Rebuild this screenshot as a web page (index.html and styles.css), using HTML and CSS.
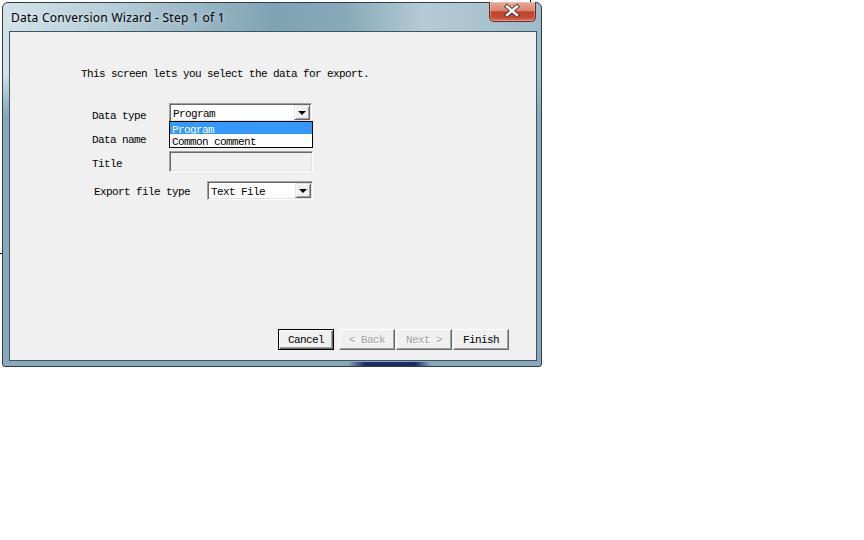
FILE: index.html
```html
<!DOCTYPE html>
<html lang="en">
<head>
  <meta charset="UTF-8" />
  <title>Data Conversion Wizard</title>
  <link rel="stylesheet" href="styles.css">
</head>
<body>
  <div class="window">
    <div class="titlebar">
      <span class="title">Data Conversion Wizard - Step 1 of 1</span>
      <button class="close-btn" aria-label="Close">
        <svg width="47" height="20" viewBox="0 0 47 20">
          <path d="M18 5.5 L28 14 M28 5.5 L18 14" stroke="#4a2a26" stroke-width="4.2" stroke-linecap="square" fill="none"/>
          <path d="M18 5.5 L28 14 M28 5.5 L18 14" stroke="#fff" stroke-width="2.4" stroke-linecap="square" fill="none"/>
        </svg>
      </button>
    </div>

    <div class="client">
      <p class="intro">This screen lets you select the data for export.</p>

      <div class="form">
        <div class="row row-type">
          <label>Data type</label>
          <div class="combo combo-wide">
            <span class="combo-text">Program</span>
            <span class="combo-arrow"></span>
            <ul class="combo-list">
              <li class="selected">Program</li>
              <li>Common comment</li>
            </ul>
          </div>
        </div>

        <div class="row row-name">
          <label>Data name</label>
          <div class="field"></div>
        </div>

        <div class="row row-title">
          <label>Title</label>
          <div class="field disabled"></div>
        </div>

        <div class="row row-export">
          <label class="label-wide">Export file type</label>
          <div class="combo combo-narrow">
            <span class="combo-text">Text File</span>
            <span class="combo-arrow"></span>
          </div>
        </div>
      </div>

      <div class="buttons">
        <button class="btn btn-default">Cancel</button>
        <button class="btn" disabled>&lt; Back</button>
        <button class="btn" disabled>Next &gt;</button>
        <button class="btn">Finish</button>
      </div>
    </div>
  </div>
</body>
</html>
```

FILE: styles.css
```css
* {
  box-sizing: border-box;
}

body {
  margin: 0;
  background:
    linear-gradient(#000, #000) 530px 0 / 1px 2px no-repeat,
    linear-gradient(#000, #000) 0 253px / 2px 1px no-repeat,
    #fff;
  font-family: "Liberation Mono", monospace;
  font-size: 11px;
  letter-spacing: -0.6px;
  color: #000;
}

/* window frame */
.window {
  position: relative;
  margin: 2px 0 0 2px;
  width: 540px;
  height: 365px;
  border: 1px solid #2e3d47;
  border-radius: 6px 6px 3px 3px;
  padding: 0 4px 5px 6px;
  display: flex;
  flex-direction: column;
  background:
    linear-gradient(to right, transparent 345px, #1b2a63 362px, #1b2a63 412px, transparent 428px) left bottom / 100% 4px no-repeat,
    linear-gradient(to bottom, rgba(136,170,187,0) 0, rgba(136,170,187,0) 70px, #88a9b9 112px),
    linear-gradient(to right, #d3e2e9 0, #b5cdd8 110px, #80a3b4 270px, #86a8b8 340px, #b3cbd6 420px, #9fbac8 540px);
}

.titlebar {
  height: 28px;
  padding: 7px 0 0 2px;
}

.title {
  font-family: "Noto Sans", sans-serif;
  font-size: 12px;
  letter-spacing: 0.25px;
  line-height: 16px;
  color: #000;
  text-shadow: 0 0 6px rgba(255,255,255,0.6);
}

.close-btn {
  position: absolute;
  top: -1px;
  right: 5px;
  width: 47px;
  height: 20px;
  padding: 0;
  border: 1px solid #6b2b22;
  border-top: none;
  border-radius: 0 0 5px 5px;
  background: linear-gradient(#e9aa9b, #d98572 45%, #c4432f 52%, #c24a36 80%, #d9765f);
  box-shadow: inset 0 0 0 1px rgba(255,220,210,0.35);
}

.close-btn svg {
  display: block;
  margin: -1px 0 0 -1px;
}

/* client area */
.client {
  flex: 1;
  background: #f0f0f0;
  border: 1px solid #3c5565;
  display: flex;
  flex-direction: column;
  padding: 0 27px 10px 0;
}

.intro {
  margin: 36px 0 0 71px;
  line-height: 12px;
}

.form {
  margin: 23px 0 0 82px;
}

.row {
  display: flex;
  align-items: flex-start;
}

.row label {
  width: 77px;
  margin-top: 7px;
  line-height: 12px;
}

.row .label-wide {
  width: 113px;
  margin-left: 2px;
  margin-top: 5px;
}

.row-name {
  margin-top: 5px;
}

.row-title {
  margin-top: 4px;
}

.row-export {
  margin-top: 9px;
}

/* sunken boxes */
.combo,
.field {
  position: relative;
  height: 19px;
  background: #fff;
  border: 1px solid;
  border-color: #a0a0a0 #fff #fff #a0a0a0;
  box-shadow: inset 1px 1px 0 #696969, inset -1px -1px 0 #e3e3e3;
}

.combo-wide {
  width: 143px;
}

.combo-narrow {
  width: 106px;
}

.field {
  width: 144px;
  height: 20px;
}

.field.disabled {
  height: 21px;
  background: #f0f0f0;
}

.combo-text {
  display: block;
  padding: 4px 0 0 3px;
  line-height: 12px;
}

.combo-arrow {
  position: absolute;
  top: 1px;
  right: 1px;
  width: 16px;
  height: 15px;
  background: #f0f0f0;
  border: 1px solid;
  border-color: #e3e3e3 #696969 #696969 #e3e3e3;
  box-shadow: inset 1px 1px 0 #fff, inset -1px -1px 0 #a0a0a0;
}

.combo-arrow::after {
  content: "";
  position: absolute;
  left: 3px;
  top: 5px;
  border-left: 4px solid transparent;
  border-right: 4px solid transparent;
  border-top: 4px solid #000;
}

/* open dropdown list */
.combo-list {
  position: absolute;
  top: 100%;
  left: -1px;
  width: 144px;
  height: 27px;
  margin: 0;
  padding: 0;
  list-style: none;
  background: #fff;
  border: 1px solid #000;
  z-index: 2;
}

.combo-list li {
  height: 12px;
  line-height: 17px;
  padding-left: 2px;
}

.combo-list li.selected {
  background: #3399ff;
  color: #fff;
}

/* wizard buttons */
.buttons {
  margin-top: auto;
  display: flex;
  justify-content: flex-end;
  gap: 1px;
}

.btn {
  width: 56px;
  height: 21px;
  padding: 1px 0 0;
  font-family: "Liberation Mono", monospace;
  font-size: 11px;
  letter-spacing: -0.6px;
  color: #000;
  background: #f0f0f0;
  border: 1px solid;
  border-color: #fff #696969 #696969 #fff;
  box-shadow: inset -1px -1px 0 #a0a0a0;
}

.btn-default {
  margin-right: 4px;
  border-color: #000;
  box-shadow: inset 1px 1px 0 #fff, inset -1px -1px 0 #696969, inset -2px -2px 0 #a0a0a0;
}

.btn:disabled {
  color: #a0a0a0;
  text-shadow: 1px 1px 0 #fff;
}
```
